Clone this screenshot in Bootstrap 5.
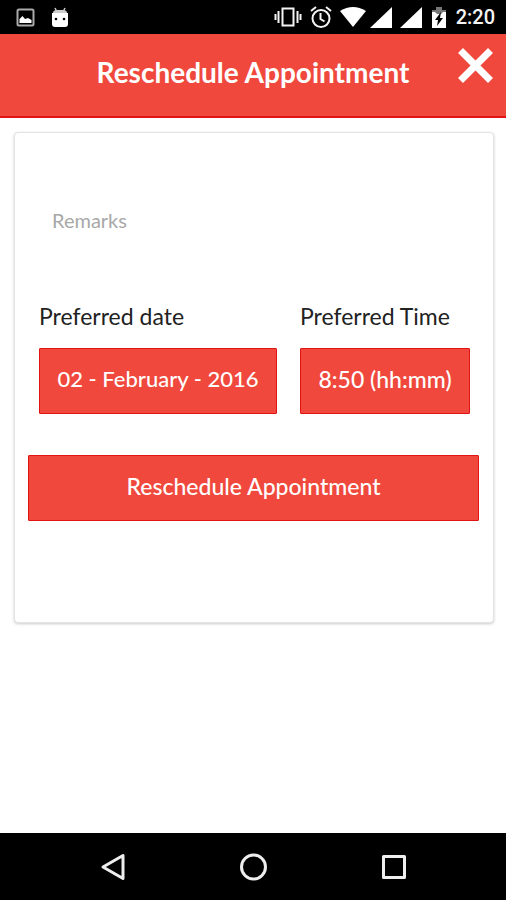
<!DOCTYPE html>
<html lang="en">
<head>
<meta charset="utf-8">
<meta name="viewport" content="width=device-width, initial-scale=1">
<title>Reschedule Appointment</title>
<link href="https://cdn.jsdelivr.net/npm/bootstrap@5.3.0/dist/css/bootstrap.min.css" rel="stylesheet">
<style>
  :root { --brand: #f0483c; --brand-edge: #e01414; }
  body { font-family: Lato, "Liberation Sans", sans-serif; background: #fff; font-size: 22px; line-height: 28px; color: #222; }
  .status-bar { height: 34px; padding: 0 11px 0 16px; background: #000; color: #f4f4f4; }
  .status-bar svg { display: block; }
  .clock { font-family: Roboto, sans-serif; font-size: 20px; line-height: 24px; font-weight: 500; }
  .app-header { display: grid; grid-template-columns: 52px 1fr 52px; min-height: 84px; padding-top: 10px; background: var(--brand); border-bottom: 2px solid var(--brand-edge); }
  .app-header h1 { grid-column: 2; font-size: 28px; line-height: 32px; font-weight: 700; padding-top: 12px; }
  .close-btn { width: 42px; height: 42px; }
  .form-card { margin: 14px 12px 14px 14px; padding: 73px 14px 101px 13px; border: 1px solid #e4e4e4; border-radius: 4px; box-shadow: 0 1px 3px rgba(0,0,0,.2); }
  .remarks { height: 52px; min-height: 0; margin: 0 24px; padding: 0; font-size: 20px; line-height: 28px; color: #222; resize: none; }
  .remarks::placeholder { color: #a8a8a8; opacity: 1; }
  .slots { display: grid; grid-template-columns: 7fr 5fr; column-gap: 23px; margin: 44px 9px 41px 11px; }
  .slots label { margin-bottom: 18px; font-size: 23px; white-space: nowrap; }
  .btn-brand { --bs-btn-color: #fff; --bs-btn-bg: var(--brand); --bs-btn-border-color: var(--brand-edge); --bs-btn-hover-color: #fff; --bs-btn-hover-bg: #df3c30; --bs-btn-hover-border-color: #c81010; --bs-btn-active-color: #fff; --bs-btn-active-bg: #cf342a; --bs-btn-border-radius: 1px; height: 66px; padding: 0 0 5px; font-size: 23px; line-height: 28px; font-weight: 500; white-space: nowrap; }
  .btn-date { font-size: 22px; }
  .nav-keys { height: 67px; padding: 0 93px; background: #000; }
</style>
</head>
<body class="d-flex flex-column min-vh-100">

<div class="status-bar d-flex align-items-center">
  <svg width="19" height="19" viewBox="0 0 19 19" aria-hidden="true"><rect x="1.500" y="1.500" width="16" height="16" rx="1.500" fill="none" stroke="#aaa" stroke-width="2"/><path d="M3.500 15V11l3-3 2.500 3 3-1 3.500 2v3z" fill="#fff"/></svg>
  <svg class="ms-3" width="18" height="21" viewBox="0 0 18 21" aria-hidden="true"><path d="M4 1l2 4M14 1l-2 4" stroke="#ccc" stroke-width="1.500"/><path d="M2 6q0-3 4-3h6q4 0 4 3z" fill="#ccc"/><path d="M1 6h16v11q0 3-3 3H4q-3 0-3-3z" fill="#fff"/><circle cx="5" cy="12" r="1.300"/><circle cx="13" cy="12" r="1.300"/></svg>
  <div class="d-flex align-items-center ms-auto">
    <svg width="28" height="22" viewBox="0 0 28 22" fill="none" stroke="#f4f4f4" stroke-width="2" aria-hidden="true"><rect x="8.500" y="2.500" width="11" height="17"/><path d="M4.500 5v12M1.500 8v6M23.500 5v12M26.500 8v6"/></svg>
    <svg class="ms-2" width="22" height="22" viewBox="0 0 22 22" fill="none" stroke="#f4f4f4" stroke-width="2" aria-hidden="true"><circle cx="11" cy="12.500" r="8.500"/><path d="M10.500 7v6l4 2.500M1 5l5-4M21 5l-5-4"/></svg>
    <svg class="ms-2" width="26" height="20" viewBox="0 0 26 20" fill="#fff" aria-hidden="true"><path d="M0 4Q13-4 26 4L13 20z"/></svg>
    <svg class="ms-1" width="22" height="21" viewBox="0 0 22 21" fill="#fff" aria-hidden="true"><path d="M0 21L22 0v21z"/></svg>
    <svg class="ms-2" width="22" height="21" viewBox="0 0 22 21" fill="#fff" aria-hidden="true"><path d="M0 21L22 0v21z"/></svg>
    <svg class="ms-2 me-2" width="18" height="21" viewBox="0 0 18 21" aria-hidden="true"><path d="M2 3h4V0h6v3h4v4H2z" fill="#777"/><path d="M2 5h3l2 2h4l2-2h3v16H2z" fill="#fff"/><path d="M11 5l-6 8h3l-1 6 6-8h-3z" fill="#000"/></svg>
    <span class="clock">2:20</span>
  </div>
</div>

<header class="app-header text-white">
  <h1 class="mb-0 text-center text-nowrap">Reschedule Appointment</h1>
  <button type="button" class="close-btn btn border-0 p-0 text-white" aria-label="Close">
    <svg class="d-block" width="42" height="42" viewBox="0 0 42 42" fill="none" stroke="currentColor" stroke-width="7" aria-hidden="true"><path d="M6.500 6.500l30 30M36.500 6.500l-30 30"/></svg>
  </button>
</header>

<main class="flex-grow-1">
  <form class="form-card bg-white">
    <div class="d-flex"><textarea class="remarks form-control border-0 shadow-none" placeholder="Remarks" aria-label="Remarks"></textarea></div>
    <div class="slots">
      <div class="d-flex flex-column">
        <label for="date">Preferred date</label>
        <button id="date" type="button" class="btn btn-brand btn-date">02 - February - 2016</button>
      </div>
      <div class="d-flex flex-column">
        <label for="time">Preferred Time</label>
        <button id="time" type="button" class="btn btn-brand">8:50 (hh:mm)</button>
      </div>
    </div>
    <button type="submit" class="btn btn-brand w-100">Reschedule Appointment</button>
  </form>
</main>

<nav class="nav-keys d-flex align-items-center justify-content-between" aria-label="System">
  <button type="button" class="btn border-0 p-0" aria-label="Back"><svg class="d-block" width="40" height="32" viewBox="0 0 40 32" fill="none" stroke="#eee" stroke-width="3" stroke-linejoin="round"><path d="M30 4.500v23L10 16z"/></svg></button>
  <button type="button" class="btn border-0 p-0" aria-label="Home"><svg class="d-block" width="40" height="32" viewBox="0 0 40 32" fill="none" stroke="#eee" stroke-width="3"><circle cx="20.500" cy="16" r="12"/></svg></button>
  <button type="button" class="btn border-0 p-0" aria-label="Recent apps"><svg class="d-block" width="40" height="32" viewBox="0 0 40 32" fill="none" stroke="#eee" stroke-width="3" stroke-linejoin="round"><path d="M10.500 5.500h21v21h-21z"/></svg></button>
</nav>

<script src="https://cdn.jsdelivr.net/npm/bootstrap@5.3.0/dist/js/bootstrap.bundle.min.js"></script>
</body>
</html>
